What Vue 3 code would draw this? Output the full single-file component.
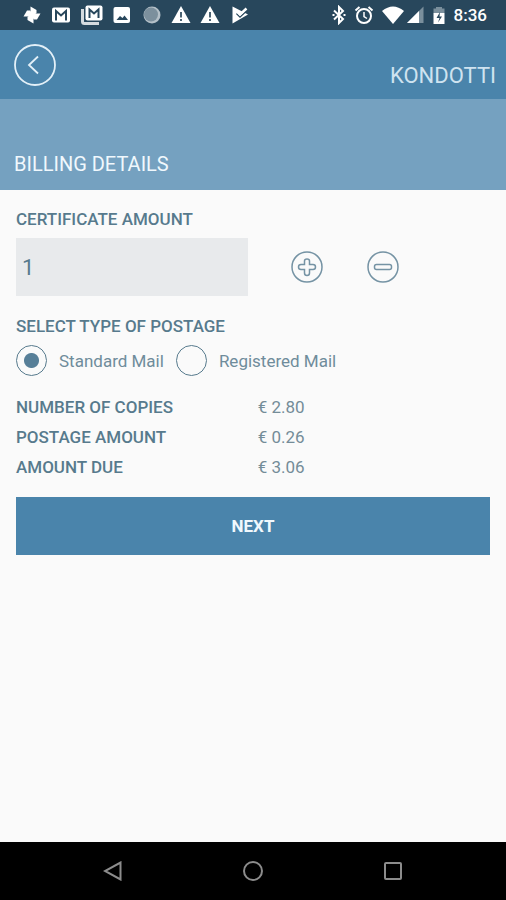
<script setup>
import { computed, ref } from 'vue'

const copies = ref('1')
const postage = ref('standard')

const options = [
  { value: 'standard', label: 'Standard Mail' },
  { value: 'registered', label: 'Registered Mail' },
]

const copyPrice = 2.8
const rates = { standard: 0.26, registered: 2.1 }

const count = computed(() => Math.max(1, parseInt(copies.value, 10) || 1))
const euro = (value) => `€ ${value.toFixed(2)}`

const summary = computed(() => {
  const copiesTotal = count.value * copyPrice
  const postageTotal = rates[postage.value]
  return [
    { label: 'NUMBER OF COPIES', value: euro(copiesTotal) },
    { label: 'POSTAGE AMOUNT', value: euro(postageTotal) },
    { label: 'AMOUNT DUE', value: euro(copiesTotal + postageTotal) },
  ]
})

function step(delta) {
  copies.value = String(Math.max(1, count.value + delta))
}
</script>

<template>
  <div class="screen">
    <div class="status">
      <div class="notices">
        <svg viewBox="0 0 20 20" class="glyph">
          <g fill="#fff">
            <path d="M8.500 11V1.500L14.500 5V8L11 11Z" />
            <path d="M9 8.500H18.500L15 14.500H12L9 11Z" />
            <path d="M11.500 9V18.500L5.500 15V12L9 9Z" />
            <path d="M11 11.500H1.500L5 5.500H8L11 9Z" />
          </g>
        </svg>
        <svg viewBox="0 0 20 20" class="glyph">
          <rect x="1" y="2.500" width="18" height="15" rx="2" fill="#fff" />
          <path d="M5 15.500V6L10 10.500L15 6V15.500" fill="none" stroke="#28475c" stroke-width="2" />
        </svg>
        <svg viewBox="0 0 22 20" class="glyph wide">
          <path d="M1.500 4V16.500Q1.500 18.500 3.500 18.500H18" fill="none" stroke="#d5dbdf" stroke-width="3" />
          <rect x="4.500" y="0.500" width="17" height="15" rx="2" fill="#fff" />
          <path d="M8.500 13V4.500L13 8.500L17.500 4.500V13" fill="none" stroke="#28475c" stroke-width="2" />
        </svg>
        <svg viewBox="0 0 20 20" class="glyph">
          <rect x="1.500" y="2" width="16.500" height="16" rx="2" fill="#fff" />
          <path d="M4.500 15L8 11L10.500 13L12.500 10.500L16 15Z" fill="#28475c" />
        </svg>
        <svg viewBox="0 0 20 20" class="glyph">
          <circle cx="10" cy="10" r="8.500" fill="#b4c0c8" />
          <circle cx="9" cy="9.500" r="7" fill="#7c909d" />
        </svg>
        <svg v-for="n in 2" :key="n" viewBox="0 0 20 20" class="glyph">
          <path d="M10 1L19.500 18H0.500Z" fill="#fff" />
          <path d="M10 7V12.500M10 14V16" stroke="#4b6373" stroke-width="2" />
        </svg>
        <svg viewBox="0 0 20 20" class="glyph">
          <path d="M2.500 1.500L18 9.500L2.500 18.500Z" fill="#fff" />
          <path d="M6.500 8.500L10 12L17.500 5" fill="none" stroke="#28475c" stroke-width="1.500" />
          <path d="M7 6.500L10 9.500L16.500 3.500" fill="none" stroke="#fff" stroke-width="2.500" />
        </svg>
      </div>
      <div class="system">
        <svg viewBox="0 0 14 20" class="narrow">
          <path d="M2 5.500L11 14L7 18V2L11 6L2 14.500" fill="none" stroke="#fff" stroke-width="2" />
          <path d="M0.500 10H2.500M11.500 10H13.500" stroke="#fff" stroke-width="2" />
        </svg>
        <svg viewBox="0 0 20 20" class="glyph">
          <circle cx="10" cy="11" r="7" fill="none" stroke="#fff" stroke-width="2" />
          <path d="M1.500 5.500L5.500 2M14.500 2L18.500 5.500" stroke="#fff" stroke-width="2" />
          <path d="M10 7V11.500L13 13.500" fill="none" stroke="#fff" stroke-width="1.500" />
        </svg>
        <div class="radio">
          <svg viewBox="0 0 22 20" class="glyph wide">
            <path d="M0 6Q11 -3 22 6L11 19Z" fill="#fff" />
          </svg>
          <svg viewBox="0 0 18 20" class="signal">
            <path d="M17.500 1.500V18H1Z" fill="#7a8f9c" />
            <path d="M13 6V18H1Z" fill="#fff" />
          </svg>
        </div>
        <svg viewBox="0 0 14 20" class="narrow">
          <path d="M4 2H10V3.500H12.500V8H1.500V3.500H4Z" fill="#7a8f9c" />
          <path d="M1.500 8H12.500V19H1.500Z" fill="#fff" />
          <path d="M8 7L4.500 13H7.500L6 17.500L10 11.500H7.500Z" fill="#28475c" />
        </svg>
        <span class="clock">8:36</span>
      </div>
    </div>

    <header class="bar">
      <button type="button" class="back" aria-label="Back">
        <svg viewBox="0 0 42 42">
          <circle cx="21" cy="21" r="20" />
          <path d="M24 12.500L15 21L24 29.500" />
        </svg>
      </button>
      <span class="brand">KONDOTTI</span>
    </header>

    <div class="banner">
      <h1>BILLING DETAILS</h1>
    </div>

    <main class="form">
      <label class="caption" for="copies">CERTIFICATE AMOUNT</label>
      <div class="amount">
        <input id="copies" v-model="copies" type="text" inputmode="numeric" />
        <div class="steppers">
          <button type="button" aria-label="Add one" @click="step(1)">
            <svg viewBox="0 0 32 32">
              <circle cx="16" cy="16" r="15" />
              <path d="M13.500 10Q13.500 8 16 8T18.500 10V13.500H22Q24.500 13.500 24.500 16T22 18.500H18.500V22Q18.500 24.500 16 24.500T13.500 22V18.500H10Q7.500 18.500 7.500 16T10 13.500H13.500Z" />
            </svg>
          </button>
          <button type="button" aria-label="Remove one" @click="step(-1)">
            <svg viewBox="0 0 32 32">
              <circle cx="16" cy="16" r="15" />
              <rect x="7.500" y="13.500" width="17" height="5" rx="2" />
            </svg>
          </button>
        </div>
      </div>

      <fieldset class="postage">
        <legend class="caption">SELECT TYPE OF POSTAGE</legend>
        <div class="options">
          <label v-for="option in options" :key="option.value">
            <input v-model="postage" type="radio" name="postage" :value="option.value" />
            <span>{{ option.label }}</span>
          </label>
        </div>
      </fieldset>

      <dl class="summary">
        <div v-for="line in summary" :key="line.label">
          <dt>{{ line.label }}</dt>
          <dd>{{ line.value }}</dd>
        </div>
      </dl>

      <button type="button" class="next">NEXT</button>
    </main>

    <nav class="keys">
      <button type="button" aria-label="Back">
        <svg viewBox="0 0 20 20"><path d="M17.500 1.500V18.500L2 10Z" /></svg>
      </button>
      <button type="button" aria-label="Home">
        <svg viewBox="0 0 20 20"><circle cx="10" cy="10" r="9" /></svg>
      </button>
      <button type="button" aria-label="Recent apps">
        <svg viewBox="0 0 20 20"><rect x="2" y="2" width="16" height="16" rx="1" /></svg>
      </button>
    </nav>
  </div>
</template>

<style>
body {
  margin: 0;
  background: #fafafa;
}
</style>

<style scoped>
.screen {
  display: flex;
  flex-direction: column;
  min-height: 100vh;
  background: #fafafa;
  color: #577a8d;
  font-family: Roboto, "Liberation Sans", sans-serif;
}

svg {
  display: block;
}

button {
  padding: 0;
  border: 0;
  background: none;
  font-family: inherit;
  cursor: pointer;
}

.status {
  display: flex;
  justify-content: space-between;
  align-items: center;
  height: 30px;
  padding: 0 19px 0 22px;
  background: #28475c;
}

.notices {
  display: flex;
  justify-content: space-between;
  flex: 0 0 49%;
}

.glyph {
  width: 20px;
  height: 20px;
}

.glyph.wide {
  width: 22px;
}

.system {
  display: flex;
  align-items: center;
  gap: 8px;
}

.radio {
  display: flex;
  gap: 2px;
}

.narrow {
  width: 14px;
  height: 20px;
}

.signal {
  width: 18px;
  height: 20px;
}

.clock {
  color: #fff;
  font-size: 17px;
  font-weight: 500;
  line-height: 20px;
}

.bar {
  display: flex;
  justify-content: space-between;
  height: 69px;
  box-sizing: border-box;
  padding: 14px 10px 0 14px;
  background: #4a84ab;
}

.back {
  width: 42px;
  height: 42px;
}

.back svg {
  fill: none;
  stroke: #e3f0f8;
  stroke-width: 1.8;
}

.brand {
  padding-top: 18px;
  color: #cfe3f0;
  font-size: 22px;
  line-height: 28px;
}

.banner {
  display: flex;
  align-items: flex-end;
  height: 91px;
  box-sizing: border-box;
  padding: 0 14px 14px;
  background: #75a1c0;
}

h1 {
  margin: 0;
  color: #f0f8fd;
  font-size: 20px;
  font-weight: 400;
  line-height: 24px;
}

.form {
  display: flex;
  flex: 1;
  flex-direction: column;
  padding: 19px 16px;
}

.caption {
  padding: 0;
  font-size: 17px;
  font-weight: 500;
  line-height: 20px;
}

.amount {
  display: flex;
  align-items: center;
  gap: 43px;
  margin-top: 9px;
}

.amount input {
  width: 49%;
  height: 58px;
  box-sizing: border-box;
  padding: 0 6px;
  border: 0;
  border-radius: 0;
  background: #e8eaec;
  color: #577a8d;
  font-family: inherit;
  font-size: 22px;
}

.steppers {
  display: flex;
  gap: 44px;
}

.steppers button {
  width: 32px;
  height: 32px;
}

.steppers svg {
  fill: none;
  stroke: #7593a4;
  stroke-width: 1.5;
}

.postage {
  min-width: 0;
  margin: 20px 0 0;
  padding: 0;
  border: 0;
}

.options {
  display: flex;
  flex-wrap: wrap;
  gap: 12px;
  margin-top: 9px;
}

.options label {
  display: flex;
  align-items: center;
  gap: 12px;
  color: #6f8c9b;
  font-size: 17px;
  line-height: 20px;
}

.options input {
  appearance: none;
  width: 31px;
  height: 31px;
  margin: 0;
  border: 1px solid #577a8d;
  border-radius: 50%;
}

.options input:checked {
  background: radial-gradient(circle, #577f98 7px, transparent 8px);
}

.summary {
  margin: 16px 0 15px;
}

.summary div {
  display: grid;
  grid-template-columns: 51% 1fr;
  font-size: 17px;
  line-height: 30px;
}

dt {
  font-weight: 500;
}

dd {
  margin: 0;
  color: #748c98;
}

.next {
  height: 58px;
  background: #4a84ab;
  color: #f0f8fd;
  font-size: 17px;
  font-weight: 700;
}

.keys {
  display: flex;
  justify-content: center;
  align-items: center;
  gap: 120px;
  height: 58px;
  background: #000;
}

.keys button {
  width: 20px;
  height: 20px;
}

.keys svg {
  fill: none;
  stroke: #8c8c8c;
  stroke-width: 2;
}
</style>
